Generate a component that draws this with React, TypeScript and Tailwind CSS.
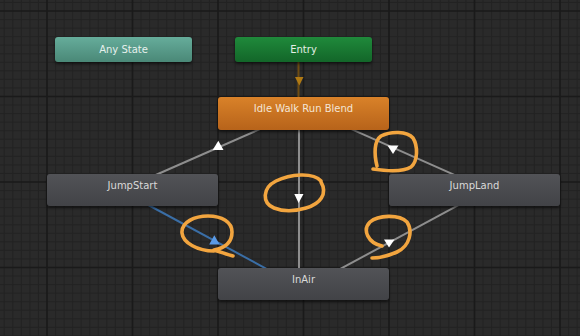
import React from 'react';

type NodeProps = {
    label: string;
    x: number;
    y: number;
    w: number;
    h: number;
    kind: 'any' | 'entry' | 'default' | 'state';
    tall?: boolean;
};

const kindClass: Record<NodeProps['kind'], string> = {
    any: 'bg-gradient-to-b from-[#66ad9b] to-[#4a8877] text-[#e6f0ec]',
    entry: 'bg-gradient-to-b from-[#1f8a3b] to-[#136629] text-[#e3efe5]',
    default: 'bg-gradient-to-b from-[#d98229] to-[#b7631a] text-[#f4e6d6]',
    state: 'bg-gradient-to-b from-[#525357] to-[#424347] text-[#d9d9d9]',
};

function StateNode({ label, x, y, w, h, kind, tall }: NodeProps) {
    return (
        <div
            className={`absolute flex justify-center rounded-[3px] shadow-[0_2px_3px_rgba(0,0,0,0.55)] ${kindClass[kind]} ${tall ? 'items-start pt-[6px]' : 'items-center'}`}
            style={{ left: x, top: y, width: w, height: h }}
        >
            <span className="text-[10px] leading-[12px] font-['DejaVu_Sans',sans-serif]">{label}</span>
        </div>
    );
}

// grid: major every 85.5px, 10 subdivisions
function Grid() {
    const step = 8.55;
    const minor = [];
    const major = [];
    for (let i = -6; i < 64; i++) {
        const x = 47 + i * step;
        const isMajor = i % 10 === 0;
        const el = (
            <line key={'v' + i} x1={x} y1={0} x2={x} y2={336} stroke={isMajor ? '#1a1a1a' : '#232323'} strokeWidth={isMajor ? 1.6 : 1} />
        );
        (isMajor ? major : minor).push(el);
    }
    for (let j = -2; j < 40; j++) {
        const y = 11 + j * step;
        const isMajor = j % 10 === 0;
        const el = (
            <line key={'h' + j} x1={0} y1={y} x2={580} y2={y} stroke={isMajor ? '#1a1a1a' : '#232323'} strokeWidth={isMajor ? 1.6 : 1} />
        );
        (isMajor ? major : minor).push(el);
    }
    return (
        <g>
            {minor}
            {major}
        </g>
    );
}

function App() {
    const gray = '#8e8e8e';
    const orange = '#f2a53f';

    return (
        <div className="relative w-[580px] h-[336px] overflow-hidden bg-[#2a2a2a]">
            {/* canvas: grid + transitions */}
            <svg className="absolute inset-0" width={580} height={336}>
                <Grid />

                {/* Entry -> Idle */}
                <line x1={298.5} y1={62} x2={298.5} y2={97} stroke="#6e4c12" strokeWidth={2} />
                <polygon points="295,77 303.5,77 299.3,85.5" fill="#b07a14" />

                {/* Idle -> JumpStart */}
                <line x1={280} y1={120.3} x2={150} y2={177.5} stroke={gray} strokeWidth={2} />
                <polygon points="218.3,140.7 223.5,150 212.7,150" fill="#ffffff" />

                {/* Idle -> InAir */}
                <line x1={299} y1={130} x2={299} y2={268} stroke={gray} strokeWidth={2} />
                <polygon points="294.3,194 303.5,194 298.6,203" fill="#ffffff" />

                {/* Idle -> JumpLand */}
                <line x1={330} y1={119.7} x2={460} y2={177.4} stroke={gray} strokeWidth={2} />
                <polygon points="387.5,145.5 398.5,145.5 393,154" fill="#ffffff" />

                {/* JumpLand -> InAir */}
                <line x1={470} y1={198.9} x2={325} y2={277.2} stroke={gray} strokeWidth={2} />
                <polygon points="384,239.5 394.5,239.5 389,247.5" fill="#ffffff" />

                {/* JumpStart -> InAir (selected) */}
                <line x1={140} y1={200.5} x2={285} y2={278.8} stroke="#3a6ea6" strokeWidth={2} />
                <polygon points="214.3,235.3 219.6,244.5 209.2,244.5" fill="#5a9ae6" />
            </svg>

            <StateNode label="Any State" x={55} y={37} w={137} h={25} kind="any" />
            <StateNode label="Entry" x={235} y={37} w={137} h={25} kind="entry" />
            <StateNode label="Idle Walk Run Blend" x={218} y={97} w={171} h={33} kind="default" tall />
            <StateNode label="JumpStart" x={47} y={174} w={171} h={32} kind="state" tall />
            <StateNode label="JumpLand" x={389} y={174} w={171} h={32} kind="state" tall />
            <StateNode label="InAir" x={218} y={268} w={171} h={32} kind="state" tall />

            {/* hand-drawn marks */}
            <svg className="absolute inset-0 pointer-events-none" width={580} height={336}>
                <g fill="none" stroke={orange} strokeWidth={3.6} strokeLinecap="round" strokeLinejoin="round">
                    <path d="M 377 166 C 374 154, 374 141, 381 136 C 391 131, 407 131, 413 138 C 418 146, 418 161, 411 167 C 403 172, 386 171, 373 169" />
                    <path d="M 321 181 C 313 172, 290 174, 276 181 C 262 188, 262 203, 274 208 C 284 212, 296 211, 306 208 C 320 204, 328 194, 321 182" />
                    <path d="M 214 251 C 198 251, 183 243, 182 233 C 181 222, 195 216, 208 216 C 222 216, 232 222, 232 232 C 232 242, 225 248, 214 250 C 221 252, 228 255, 233 256" />
                    <path d="M 382 246 C 368 243, 362 230, 370 222 C 378 215, 399 214, 407 222 C 413 231, 410 246, 397 252 C 388 256, 378 258, 372 258" />
                </g>
            </svg>
        </div>
    );
}

export default App;
